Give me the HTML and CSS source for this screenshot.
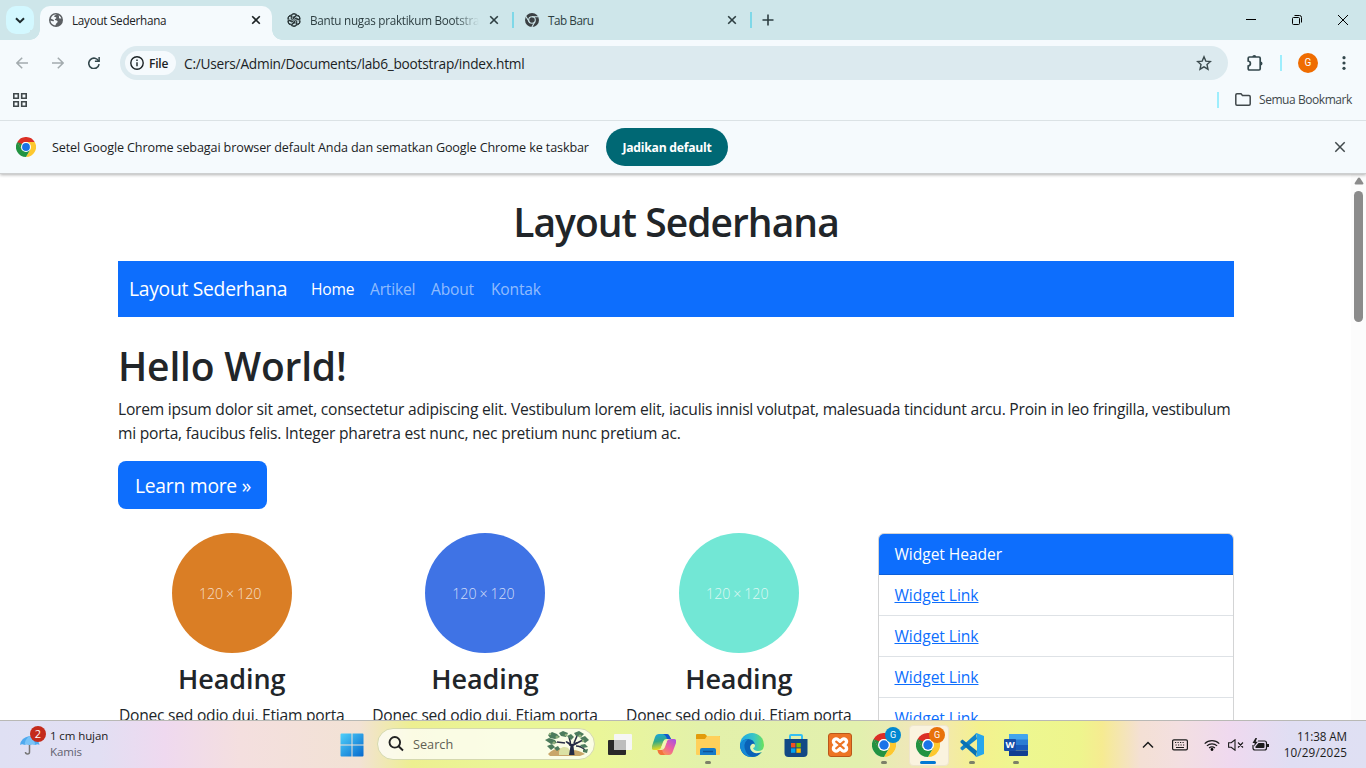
FILE: index.html
```html
<!DOCTYPE html>
<html lang="id">
<head>
<meta charset="utf-8">
<title>Layout Sederhana</title>
<link rel="stylesheet" href="styles.css">
</head>
<body>
<svg width="0" height="0" class="defs">
  <defs>
    <symbol id="x" viewBox="0 0 10 10"><path d="M1.200 1.200l7.600 7.600M8.800 1.200L1.200 8.800" fill="none" stroke="currentColor" stroke-width="1.600"/></symbol>
    <symbol id="chrome" viewBox="0 0 24 24">
      <circle cx="12" cy="12" r="12" fill="#fff"/>
      <path d="M12 6h10.400A12 12 0 0 1 12 24l5.200-9z" fill="#fdc82f"/>
      <path d="M1.600 6A12 12 0 0 0 12 24l5.200-9L6.800 15z" fill="#229342"/>
      <path d="M1.600 6A12 12 0 0 1 22.400 6H12a6 6 0 0 0-5.200 9z" fill="#db2f25"/>
      <path d="M1.600 6L6.800 15l1.500-6z" fill="#229342"/>
      <circle cx="12" cy="12" r="6" fill="#fff"/><circle cx="12" cy="12" r="4.700" fill="#1a73e8"/>
    </symbol>
  </defs>
</svg>
<div class="screen">
  <header class="browser">
    <div class="tabstrip">
      <button class="tab-search"><svg width="10" height="7" viewBox="0 0 10 7"><path d="M1 1.200l4 4 4-4" fill="none" stroke="#1d2b2e" stroke-width="2"/></svg></button>
      <div class="tab active">
        <svg class="fav" width="14" height="14" viewBox="0 0 14 14"><circle cx="7" cy="7" r="7" fill="#5b5f63"/><path d="M7.800 1.600c-1 .7-2.800.8-2.600 2 .3.8 1.900.3 2.200 1.200.2 1-1.600 1-1.600 1.900 0 .7 1.900.4 2.600 1.200.8 1-.3 1.500-.8 2.200-.4.700-.6 1.500-1.400 2.300C3.300 12 1.600 9.900 1.500 7.500c1.200.4 2.700 1 3.300.5.8-.6-.4-1.100-1-1.500-.8-.5-1.600-.7-2-1A5.600 5.600 0 0 1 7.800 1.600zM9.500 2.300c1.300.6 2.300 1.700 2.800 3.100-.8.300-1.600.3-2.100-.2-.6-.6.4-1.400-.7-2.900z" fill="#f5fafd"/></svg>
        <span class="tab-title t1">Layout Sederhana</span>
        <svg class="close" width="10" height="10"><use href="#x"/></svg>
      </div>
      <div class="tab">
        <svg class="fav" width="14" height="14" viewBox="0 0 14 14" fill="none" stroke="#263234" stroke-width="1"><g id="k"><path id="petal" d="M7 4.700l2-1.200V2.900A2.500 2.500 0 0 0 4.300 2L4.200 6l2 1.200M4.500 2.200a2.500 2.500 0 0 0-2.500 4"/><use href="#petal" transform="rotate(60 7 7)"/><use href="#petal" transform="rotate(120 7 7)"/></g><use href="#k" transform="rotate(180 7 7)"/></svg>
        <span class="tab-title t2">Bantu nugas praktikum Bootstra</span>
        <svg class="close" width="10" height="10"><use href="#x"/></svg>
      </div>
      <i class="sep"></i>
      <div class="tab third">
        <svg class="fav" width="14" height="14" viewBox="0 0 14 14"><circle cx="7" cy="7" r="7" fill="#3b4043"/><g fill="none" stroke="#cee6ea" stroke-width="1.100"><circle cx="7" cy="7" r="3.300"/><path d="M7 3.700h6.500M4.200 8.700L.8 3.200M9.800 8.700l-3 5.500"/></g></svg>
        <span class="tab-title t3">Tab Baru</span>
        <svg class="close" width="10" height="10"><use href="#x"/></svg>
      </div>
      <i class="sep"></i>
      <svg class="plus" width="12" height="12" viewBox="0 0 12 12"><path d="M6 .5v11M.5 6h11" stroke="#2d3e41" stroke-width="1.600"/></svg>
      <div class="winctl">
        <svg width="10" height="10" viewBox="0 0 10 10"><path d="M0 4.500h10" stroke="#000"/></svg>
        <svg width="10" height="10" viewBox="0 0 10 10" fill="none" stroke="#000"><rect x=".5" y="2.500" width="7" height="7" rx="1"/><path d="M2.500.5h5a2 2 0 0 1 2 2v5"/></svg>
        <svg width="10" height="10" viewBox="0 0 10 10"><path d="M0 0l10 10M10 0L0 10" stroke="#000"/></svg>
      </div>
    </div>
    <div class="toolbar">
      <svg class="nav-ic" width="12" height="12" viewBox="0 0 12 12" fill="none" stroke="#a3abae" stroke-width="1.500"><path d="M12 6H1M6.200.7L.9 6l5.300 5.300"/></svg>
      <svg class="nav-ic" width="12" height="12" viewBox="0 0 12 12" fill="none" stroke="#a3abae" stroke-width="1.500"><path d="M0 6h11M5.800.7L11.100 6l-5.300 5.300"/></svg>
      <svg class="nav-ic" width="12" height="12" viewBox="0 0 12 12"><path d="M10.700 4.200A5.200 5.200 0 1 0 11.100 7.200" fill="none" stroke="#33474c" stroke-width="1.600"/><path d="M11.900 0v5H6.900V3.500h3.500V0z" fill="#33474c"/></svg>
      <div class="omnibox">
        <span class="chip"><svg width="14" height="14" viewBox="0 0 14 14"><circle cx="7" cy="7" r="6.200" fill="none" stroke="#1b2224" stroke-width="1.400"/><path d="M7 6.200v4M7 3.600v1.400" stroke="#1b2224" stroke-width="1.400"/></svg><b>File</b></span>
        <span class="url">C:/Users/Admin/Documents/lab6_bootstrap/index.html</span>
        <svg class="star" width="16" height="16" viewBox="0 0 16 16"><path d="M8 1.800l1.800 4.300 4.700.4-3.500 3.100 1 4.600L8 11.800l-4 2.400 1-4.600L1.500 6.500l4.700-.4z" fill="none" stroke="#3b4a4d" stroke-width="1.400"/></svg>
      </div>
      <svg class="puzzle" width="18" height="18" viewBox="0 0 18 18"><path d="M2.200 4.200q0-1.200 1.200-1.200H13q1.200 0 1.200 1.200v10.600q0 1.200-1.200 1.200H3.400q-1.200 0-1.200-1.200V12q2.200-.4 2.200-2.500T2.200 7z" fill="none" stroke="#33474c" stroke-width="1.700"/><path d="M6.300 3a2 2 0 0 1 4 0zM14.500 7.500a2 2 0 0 1 0 4z" fill="#33474c"/></svg>
      <i class="tsep"></i>
      <span class="avatar">G</span>
      <svg class="dots" width="4" height="14" viewBox="0 0 4 14" fill="#33474c"><circle cx="2" cy="1.700" r="1.600"/><circle cx="2" cy="7" r="1.600"/><circle cx="2" cy="12.300" r="1.600"/></svg>
    </div>
    <div class="bookmarks">
      <svg width="14" height="14" viewBox="0 0 14 14" fill="none" stroke="#40484b" stroke-width="1.600"><path d="M.8.800h4.500v4.500H.8zM8.700.800h4.500v4.500H8.700zM.8 8.700h4.500v4.500H.8zM8.700 8.700h4.500v4.500H8.700z"/></svg>
      <i class="tsep bsep"></i>
      <svg width="16" height="13" viewBox="0 0 16 13"><path d="M.8 11V2q0-1.200 1.200-1.200h4L7.500 2.600H14q1.200 0 1.200 1.200V11q0 1.200-1.200 1.200H2Q.8 12.200.8 11z" fill="none" stroke="#40484b" stroke-width="1.500"/></svg>
      <span>Semua Bookmark</span>
    </div>
    <div class="infobar">
      <svg width="20" height="20"><use href="#chrome"/></svg>
      <span class="info-text">Setel Google Chrome sebagai browser default Anda dan sematkan Google Chrome ke taskbar</span>
      <button class="make-default">Jadikan default</button>
      <svg class="close" width="12" height="12" viewBox="0 0 12 12"><path d="M1.300 1.300l9.400 9.400M10.700 1.300l-9.400 9.400" stroke="#40484b" stroke-width="1.500"/></svg>
    </div>
  </header>

  <main class="viewport">
    <div class="page">
      <h1 class="title">Layout Sederhana</h1>
      <nav class="navbar">
        <a class="brand">Layout Sederhana</a>
        <a class="on">Home</a><a class="artikel">Artikel</a><a class="about">About</a><a class="kontak">Kontak</a>
      </nav>
      <h1 class="hello">Hello World!</h1>
      <p class="lead">Lorem ipsum dolor sit amet, consectetur adipiscing elit. Vestibulum lorem elit, iaculis innisl volutpat, malesuada tincidunt arcu. Proin in leo fringilla, vestibulum<br>mi porta, faucibus felis. Integer pharetra est nunc, nec pretium nunc pretium ac.</p>
      <a class="btn">Learn more »</a>
      <div class="row">
        <section class="col"><div class="ph orange"><span>120 × 120</span></div><h3>Heading</h3><p>Donec sed odio dui. Etiam porta</p></section>
        <section class="col"><div class="ph blue"><span>120 × 120</span></div><h3>Heading</h3><p>Donec sed odio dui. Etiam porta</p></section>
        <section class="col"><div class="ph teal"><span>120 × 120</span></div><h3>Heading</h3><p>Donec sed odio dui. Etiam porta</p></section>
        <aside class="side">
          <div class="card">
            <div class="card-h">Widget Header</div>
            <div class="item"><a>Widget Link</a></div><div class="item"><a>Widget Link</a></div><div class="item"><a>Widget Link</a></div><div class="item"><a>Widget Link</a></div>
          </div>
        </aside>
      </div>
    </div>
    <div class="scrollbar"><svg width="10" height="8" viewBox="0 0 10 8"><path d="M5 .5q.6 0 1 .6l3.300 5Q9.800 7.500 8.500 7.500h-7Q.2 7.500.7 6.100L4 1.100Q4.400.5 5 .5z" fill="#8b8b8b"/></svg><i></i></div>
  </main>

  <footer class="taskbar">
    <div class="weather">
      <div class="w-icon">
        <svg width="20" height="20" viewBox="0 0 20 20"><path d="M9.500 8v9q0 2-2 2t-2-2" fill="none" stroke="#777" stroke-width="1.500"/><path d="M0 10Q1 2.500 9.500 1 18 2.500 19.500 10q-2-1.500-4 0-3-1.500-6 0-3-1.500-5 0-2.500-1.500-4.500 0z" fill="#4fa9ee"/><path d="M4.500 10Q5 4 9.500 1q4.500 3 6 9-3-1.500-6 0-3-1.500-5 0z" fill="#79c3f7"/></svg>
        <b>2</b>
      </div>
      <div class="w-text"><span>1 cm hujan</span><small>Kamis</small></div>
    </div>
    <div class="dock">
      <div class="app"><svg width="24" height="24" viewBox="0 0 24 24"><defs><linearGradient id="win" x2="1" y2="1"><stop stop-color="#4fd0fa"/><stop offset="1" stop-color="#0669cd"/></linearGradient></defs><path d="M1.500.5H11.500v11H.5v-10q0-1 1-1zM12.500.5h10q1 0 1 1v10h-11zM.5 12.500h11v11h-10q-1 0-1-1zM12.500 12.500h11v10q0 1-1 1h-10z" fill="url(#win)"/></svg></div>
      <div class="search">
        <svg width="16" height="16" viewBox="0 0 16 16" fill="none" stroke="#222" stroke-width="1.900"><circle cx="6.800" cy="6.300" r="5.300"/><path d="M10.600 10.200l4.400 4.300"/></svg>
        <span>Search</span>
        <svg class="tree" width="44" height="26" viewBox="0 0 44 26"><path d="M3 23q9-9 20-3 7-3 17 3l-5 2H5z" fill="#c9a66a"/><path d="M14 24q-1-6 4-8 8-1 7 8z" fill="#dbe1a4"/><path d="M25 15q1-4-1-9M20 12l-8-1M31 15q5 0 9 4M30 13l8-4M29 12l3-7" fill="none" stroke="#292e45" stroke-width="1.600"/><path d="M24 24l1.500-9-5-4 1-1 5.500 3 5-2 .5 1.500-4 2.500 1 9z" fill="#252a45"/><g fill="#4c7b5c"><path d="M3 4l4-3 5 2 3 3-5 2-5-1zM0 9l4-2 6 2 2 3-6 1zM14 2l4-2 5 2-2 4-5-1zM22 5l4-2 3 3-3 3zM29 2l5-2 5 3-3 3-5-1zM35 7l5-2 4 4-4 3zM35 14l5-1 3 3-5 1zM2 15l5-2 3 3-4 3zM38 19l5-1-1 4-4-1zM9 17l4-2 2 3-3 2z"/></g><g fill="#8eaf7b"><circle cx="12" cy="6" r="1.500"/><circle cx="21" cy="4" r="1.300"/><circle cx="35" cy="5" r="1.500"/><circle cx="9" cy="12" r="1.400"/><circle cx="38" cy="10" r="1.300"/><circle cx="5" cy="3" r="1.200"/></g></svg>
      </div>
      <div class="app"><svg width="24" height="24" viewBox="0 0 24 24"><rect y="7" width="18" height="15" rx="1" fill="#292929"/><rect x="6" y="1" width="18" height="16" rx="1" fill="#f6f6f6"/><path d="M6 7h12v10H6z" fill="#bdbdbd"/></svg></div>
      <div class="app"><svg width="24" height="24" viewBox="0 0 24 24"><defs><linearGradient id="cp1" x2=".2" y2="1"><stop stop-color="#18a6e5"/><stop offset=".5" stop-color="#32a986"/><stop offset="1" stop-color="#eadb20"/></linearGradient><linearGradient id="cp2" x1="1" x2=".2" y2="1"><stop stop-color="#9f51e8"/><stop offset=".5" stop-color="#ed5f9f"/><stop offset="1" stop-color="#fca245"/></linearGradient></defs><path d="M7 1h8q2 0 3 3l1 2h-5q-2 0-3 3l-2 6q-1 2-4 2H2q-3 0-2-4L3 4Q4 1 7 1z" fill="url(#cp1)"/><path d="M17 22H9q-2 0-3-3l-1-2h5q2 0 3-3l2-6q1-2 4-2h3q3 0 2 4l-3 8q-1 4-4 4z" fill="url(#cp2)"/><path d="M11 1h4q2 0 3 3l1 2h-4q-1-4-4-5z" fill="#1457ce"/><path d="M6 17h4q1 4 3 5H9q-2 0-3-3z" fill="#f2733c"/><path d="M13.500 8l-3 7" stroke="#f3f4b4" stroke-width="3"/></svg></div>
      <div class="app open"><svg width="24" height="24" viewBox="0 0 24 24"><path d="M0 2q0-1 1-1h8l2 2h12q1 0 1 1v5H0z" fill="#e29b0b"/><path d="M0 6h9l2-3h12q1 0 1 1v17q0 1-1 1H1q-1 0-1-1z" fill="#ffd05b"/><path d="M4 22v-5q0-2 2-2h12q2 0 2 2v5z" fill="#167bc9"/><path d="M7 18.500h10" stroke="#0d529a" stroke-width="1.500"/></svg></div>
      <div class="app"><svg width="24" height="24" viewBox="0 0 24 24"><defs><linearGradient id="ed" x2="1"><stop stop-color="#1aa7e8"/><stop offset=".6" stop-color="#3ac6c4"/><stop offset="1" stop-color="#6be35a"/></linearGradient></defs><circle cx="12" cy="12" r="12" fill="url(#ed)"/><path d="M0 12Q2 6 8 6q6 0 7 6-5-1-5 3 1 5 7 5 3 0 5-1.500Q18 24 12 24 1 24 0 12z" fill="#0a62b7"/><path d="M0 12q1-5 8-6-6 5-2 13 2 4 7 5Q1 24 0 12z" fill="#1689d5"/><path d="M15 12q0 3-2 3 1 3 5 3 5 0 6-4v4l-2 1q-8 3-11-2-2-4 1-6 2-1 3 1z" fill="#e6f5b3"/></svg></div>
      <div class="app"><svg width="24" height="24" viewBox="0 0 24 24"><path d="M6 6V3q0-1 1-1h10q1 0 1 1v3" fill="none" stroke="#35c0f3" stroke-width="2"/><path d="M.5 6h23v14q0 4-4 4h-15q-4 0-4-4z" fill="#124985"/><path d="M7 10h4.400v4.400H7z" fill="#f25022"/><path d="M12.400 10h4.400v4.400h-4.400z" fill="#7fba00"/><path d="M7 15.400h4.400v4.400H7z" fill="#00a4ef"/><path d="M12.400 15.400h4.400v4.400h-4.400z" fill="#ffb900"/></svg></div>
      <div class="app"><svg width="24" height="24" viewBox="0 0 24 24"><rect x=".5" y=".5" width="23" height="23" rx="2.500" fill="#ed7525" stroke="#b9571a"/><path d="M8 8.500l8 7M16 8.500l-8 7" stroke="#fff" stroke-width="8.500" stroke-linecap="round"/><path d="M8.200 8.700l2.800 2.300h2l2.800-2.300M8.200 15.300L11 13h2l2.800 2.300" fill="none" stroke="#ed7525" stroke-width="2.200" stroke-linecap="round"/></svg></div>
      <div class="app open"><svg width="24" height="24"><use href="#chrome"/></svg><b class="badge bl">G</b></div>
      <div class="app open current"><svg width="24" height="24"><use href="#chrome"/></svg><b class="badge">G</b></div>
      <div class="app open"><svg width="24" height="24" viewBox="0 0 24 24"><path d="M17 6L2.500 17.500.5 16v-1.500L16 .500z" fill="#1283c9"/><path d="M17 18L2.500 6.500.5 8v1.500L16 23.500z" fill="#0871b4"/><path d="M16.500 0L24 3v18l-7.500 3-1-.7 1.500-2V2.700l-1.500-2z" fill="#27a6ed"/></svg></div>
      <div class="app open"><svg width="24" height="24" viewBox="0 0 24 24"><path d="M5 1h18q1 0 1 1v5H5z" fill="#41a5ee"/><path d="M5 6.500h19V12H5z" fill="#2b7cd3"/><path d="M5 12h19v5.500H5z" fill="#185abd"/><path d="M5 17.500h19V22q0 1-1 1H5z" fill="#103f91"/><rect y="6" width="12" height="12" rx="1" fill="#174ea8"/><text x="6" y="15.300" class="word-w">W</text></svg></div>
    </div>
    <div class="tray">
      <svg width="12" height="8" viewBox="0 0 12 8"><path d="M1 6.500l5-5 5 5" fill="none" stroke="#1b1b1b" stroke-width="1.500"/></svg>
      <svg class="kb" width="16" height="12" viewBox="0 0 16 12"><rect x=".6" y=".8" width="14.800" height="10" rx="1.300" fill="none" stroke="#1b1b1b" stroke-width="1.200"/><path d="M3 3.500h10M3.500 6h9" stroke="#1b1b1b" stroke-width="1.200" stroke-dasharray="1.200 1.300"/><path d="M4 8.500h8" stroke="#1b1b1b"/></svg>
      <svg class="wifi" width="16" height="12" viewBox="0 0 16 12"><g fill="none" stroke="#1b1b1b" stroke-width="1.200"><path d="M.7 4.700a10.300 10.300 0 0 1 14.600 0M2.900 6.900a7.200 7.200 0 0 1 10.200 0M5.100 9a4.100 4.100 0 0 1 5.800 0"/></g><circle cx="8" cy="10.500" r="1.400"/></svg>
      <svg class="vol" width="16" height="12" viewBox="0 0 16 12" fill="none" stroke="#1b1b1b" stroke-width="1.100"><path d="M.6 3.800h2.600L7 .8v10.400l-3.800-3H.6zM10 3.500l5 5M15 3.500l-5 5"/></svg>
      <svg class="bat" width="17" height="13" viewBox="0 0 17 13"><path d="M6 3h6.500q2 0 2 2v5q0 2-2 2H3q-2 0-2-2V7" fill="none" stroke="#1b1b1b" stroke-width="1.200"/><path d="M15 6h2v3h-2zM6.500 5h5q1 0 1 1v3q0 1-1 1H3.500V8.500z" fill="#1b1b1b"/><path d="M3.500 0L.5 5h2.200L2 8.500 5.800 3.700H3.700L5 0z" fill="#1b1b1b"/></svg>
      <div class="clock"><span>11:38 AM</span><span class="date">10/29/2025</span></div>
    </div>
  </footer>
</div>
</body>
</html>
```
FILE: styles.css
```css
* { box-sizing: border-box; }
body { margin: 0; font-family: "Open Sans", "Noto Sans", sans-serif; color: #212529; overflow: hidden; }
.defs { position: absolute; }
svg { display: block; flex: none; }
button { border: 0; padding: 0; font-family: inherit; }
.screen { width: 1366px; height: 768px; display: flex; flex-direction: column; overflow: hidden; background: #fff; white-space: nowrap; }

/* Browser frame */
.browser { flex: none; height: 174px; background: #f5fafd; border-bottom: 1px solid #cdcfd0; box-shadow: 0 1px 3px rgba(0,0,0,.3); z-index: 1; }
.tabstrip { height: 40px; background: #cee6ea; display: flex; align-items: center; padding-left: 6px; }
.tab-search { width: 28px; height: 28px; border-radius: 10px; background: #d3f8ff; display: flex; align-items: center; justify-content: center; margin-right: 6px; }
.tab { width: 232px; height: 34px; margin-top: 6px; padding: 0 11px 6px 9px; display: flex; align-items: center; color: #2d3e41; }
.tab + .tab { margin-left: 6px; }
.tab .close { margin-left: auto; }
.tab.active { background: #f5fafd; border-radius: 10px 10px 0 0; position: relative; color: #1b2224; }
.tab.active::before, .tab.active::after { content: ""; position: absolute; bottom: 0; width: 10px; height: 10px; }
.tab.active::before { left: -10px; background: radial-gradient(circle at 0 0, #cee6ea 9.500px, #f5fafd 10px); }
.tab.active::after { right: -10px; background: radial-gradient(circle at 100% 0, #cee6ea 9.500px, #f5fafd 10px); }
.tab-title { font-size: 11.700px; margin-left: 9px; }
.t1 { letter-spacing: -.27px; }
.t2 { width: 170px; letter-spacing: -.26px; -webkit-mask-image: linear-gradient(90deg, #000 145px, transparent 169px); }
.sep { width: 2px; height: 16px; background: #7fd8e8; margin-left: 2px; }
.tab.third { width: 232px; margin-left: 2px; }
.third + .sep { margin-left: 2px; }
.t3 { letter-spacing: -.45px; }
.plus { margin-left: 10px; }
.winctl { margin-left: auto; margin-right: 18px; display: flex; gap: 36px; }
.toolbar { height: 46px; display: flex; align-items: center; padding-left: 16px; }
.nav-ic { margin-right: 24px; }
.nav-ic + .nav-ic + .nav-ic { margin-right: 20px; }
.omnibox { width: 1108px; height: 34px; border-radius: 17px; background: #dceaef; display: flex; align-items: center; padding: 0 16px 0 5px; }
.chip { width: 51px; height: 24px; border-radius: 12px; background: #f5fafd; display: flex; align-items: center; padding-left: 5px; gap: 5px; font-size: 12px; color: #1b2224; letter-spacing: -.2px; }
.chip b { font-weight: 600; }
.url { margin-left: 8px; font-size: 13.700px; color: #1b2224; letter-spacing: -.24px; }
.star { margin-left: auto; }
.puzzle { margin-left: 18px; }
.tsep { width: 2px; height: 16px; background: #9eeefd; margin-left: 34px; }
.puzzle + .tsep { margin-left: 16px; }
.avatar { width: 20px; height: 20px; margin-left: 16px; border-radius: 50%; background: #ef6c00; color: #fff; font: 10px/20px Roboto, sans-serif; text-align: center; }
.dots { margin-left: 24px; }
.bookmarks { height: 35px; border-bottom: 1px solid #dbe2e5; padding: 0 14px 7px 13px; display: flex; align-items: center; font-size: 12px; color: #40484b; }
.bookmarks .bsep { margin-left: auto; margin-right: 16px; }
.bookmarks span { margin-left: 8px; width: 93px; letter-spacing: -.44px; }
.infobar { height: 52px; display: flex; align-items: center; padding: 0 20px 0 16px; }
.info-text { width: 538px; margin-left: 16px; font-size: 12.600px; color: #1b2224; letter-spacing: -.125px; }
.make-default { width: 122px; height: 38px; margin-left: 16px; border-radius: 19px; background: #006874; color: #fff; font-size: 12.200px; font-weight: 700; letter-spacing: -.25px; }
.infobar .close { margin-left: auto; }

/* Page */
.viewport { flex: 1; min-height: 0; display: flex; overflow: hidden; }
.page { width: 1351px; padding: 24px 117px 0 118px; font-size: 15.600px; line-height: 24px; letter-spacing: -.23px; }
h1, h3, p { margin: 0; }
h1 { font-size: 39px; line-height: 48px; font-weight: 600; }
.title { text-align: center; letter-spacing: -.97px; }
.hello { letter-spacing: -.2px; }
.navbar { height: 56px; margin: 15px 0 25px; background: #0d6efd; display: flex; align-items: center; padding-left: 11px; gap: 16px; color: rgba(255,255,255,.55); letter-spacing: -.18px; }
.brand { width: 158px; margin-right: 8px; color: #fff; font-size: 19.300px; letter-spacing: -.28px; }
.on { width: 43px; color: #fff; }
.artikel { width: 45px; }
.about { width: 44px; }
.lead { margin-top: 7px; }
.btn { display: flex; align-items: center; justify-content: center; width: 149px; height: 48px; margin: 16px 0 24px; padding: 1px 0 0 1px; background: #0d6efd; border-radius: 8px; color: #fff; font-size: 19.300px; letter-spacing: -.25px; }
.row { display: flex; margin: 0 -12px; }
.col { width: 253.330px; padding-right: 2px; text-align: center; display: flex; flex-direction: column; align-items: center; }
.col:nth-child(3) { padding-right: 1px; }
.ph { width: 120px; height: 120px; padding: 1px 3px 0 0; border-radius: 50%; display: flex; align-items: center; justify-content: center; color: rgba(255,255,255,.75); font-size: 14.200px; font-weight: 300; letter-spacing: 0; word-spacing: -.8px; }
.orange { background: #da7e25; }
.blue { background: #3f73e5; }
.teal { background: #72e7d5; }
h3 { margin: 9px 0 7px; font-size: 27px; line-height: 34px; font-weight: 600; letter-spacing: -.1px; }
.side { width: 380px; padding: 0 12px; }
.card { border: 1px solid #d3d4d5; border-radius: 6px; overflow: hidden; letter-spacing: -.05px; }
.card-h { height: 41px; padding: 8px 15.500px; background: #0d6efd; border-bottom: 1px solid #0c5fd9; color: #fff; }
.item { height: 41px; padding: 8px 15.500px; border-bottom: 1px solid #dee2e6; }
.item a { color: #0d6efd; text-decoration: underline; }
.scrollbar { width: 15px; display: flex; flex-direction: column; align-items: center; padding-top: 3px; background: #fcfcfc; }
.scrollbar i { width: 9px; height: 131px; margin-top: 6px; border-radius: 5px; background: #8b8b8b; }

/* Taskbar */
.taskbar { flex: none; height: 48px; display: flex; border-top: 1px solid #b9b9b5; background: linear-gradient(90deg, #dfe0f3 0, #e2dff3 100px, #efd9ef 165px, #f4dfdf 240px, #f2e2d4 360px, #edef91 412px, #e9f696 500px, #eaf699 600px, #e3f1aa 700px, #e2f0ae 860px, #f2e5bb 925px, #f4f18e 980px, #edf790 1020px, #eef58d 1080px, #f6eb91 1102px, #f4e0d4 1140px, #f3dfe1 1180px, #efd9ef 1230px, #e0def3 1290px, #dfe0f3 1366px); }
.weather { width: 330px; display: flex; padding-left: 20px; }
.w-icon { position: relative; width: 20px; padding-top: 14px; }
.w-icon b { position: absolute; left: 10px; top: 5px; width: 16px; height: 16px; border-radius: 50%; background: #c42b1c; color: #fff; font-size: 11px; font-weight: 400; line-height: 16px; text-align: center; }
.w-text { margin-left: 10px; padding-top: 7px; display: flex; flex-direction: column; font-size: 11.500px; line-height: 16px; color: #1b1b1b; letter-spacing: -.1px; }
.w-text small { font-size: 11.500px; color: #626270; }
.dock { display: flex; }
.app { position: relative; width: 44px; height: 47px; display: flex; align-items: center; justify-content: center; }
.search { width: 218px; height: 32px; margin: 7px 3px 0 3px; border-radius: 16px; background: rgba(255,255,255,.75); border: 1px solid #d5d9ae; display: flex; align-items: center; padding: 0 5px 0 10px; font-size: 12.700px; color: #5f6054; }
.search span { margin-left: 9px; }
.tree { margin-left: auto; }
.open::after { content: ""; position: absolute; left: 19px; bottom: 4px; width: 6px; height: 3px; border-radius: 2px; background: #7c8068; }
.current::before { content: ""; position: absolute; left: 3px; top: 4px; width: 38px; height: 39px; border-radius: 4px; background: #faf3df; border: 1px solid #eee5ce; }
.current svg { position: relative; }
.current::after { left: 14px; width: 16px; background: #0078d4; }
.badge { position: absolute; left: 23px; top: 6px; width: 16px; height: 16px; border-radius: 50%; background: #e8710a; color: #fff; font: 9px/16px Roboto, sans-serif; text-align: center; }
.bl { background: #0288d1; }
.word-w { fill: #fff; font-size: 9.500px; font-weight: 700; text-anchor: middle; }
.tray { margin-left: auto; margin-right: 19px; display: flex; align-items: center; }
.kb { margin-left: 18px; }
.wifi { margin-left: 16px; }
.vol { margin-left: 8px; }
.bat { margin-left: 8px; }
.clock { width: 78px; padding-bottom: 2px; display: flex; flex-direction: column; align-items: flex-end; font-size: 11.700px; line-height: 16px; color: #1b1b1b; letter-spacing: -.1px; }
.date { letter-spacing: .12px; }
```
